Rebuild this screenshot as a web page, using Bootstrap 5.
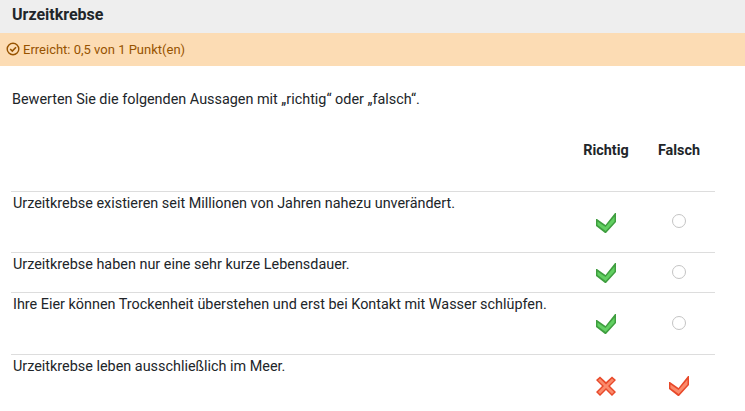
<!DOCTYPE html>
<html lang="de">
  <head>
    <meta charset="UTF-8" />
    <meta name="viewport" content="width=device-width, initial-scale=1.0" />
    <title>Urzeitkrebse</title>
    <link rel="stylesheet" href="https://cdn.jsdelivr.net/npm/bootstrap@5.3.7/dist/css/bootstrap.min.css" />
    <style>
      html, body { height: 411px; overflow: hidden; }
      body { font-family: Roboto, "Liberation Sans", sans-serif; font-size: 14.4px; color: #212529; background: #fff; }
      .quiz-head { height: 33px; background: #eeeeee; padding: 0 12px; font-size: 16px; font-weight: 700; line-height: 30px; }
      .quiz-status { height: 33px; background: #fcdcb4; color: #975300; padding: 0 6px; font-size: 13px; gap: 3px; }
      .quiz-status span { padding-top: 1px; }
      .quiz-status svg { margin-top: -1px; }
      .quiz-prompt { margin: 24px 0 0 12px; line-height: 20px; height: 20px; }
      .quiz-table { width: 704px; margin: 0 0 0 11px; border-collapse: collapse; table-layout: fixed; }
      .quiz-table th { font-weight: 700; text-align: center; vertical-align: top; padding: 30px 0 0 1px; height: 81px; }
      .quiz-table td { border-top: 1px solid #dddddd; vertical-align: top; padding: 3px 0 0 2px; line-height: 17px; }
      .quiz-table td.quiz-cell { vertical-align: middle; text-align: center; padding: 0; }
      .col-answer { width: 73px; }
      .row-tall { height: 61px; }
      .row-low { height: 40px; }
      .row-big { height: 62px; }
      .quiz-radio { display: inline-block; width: 14px; height: 14px; border: 1px solid #c4c4c4; border-radius: 50%; vertical-align: middle; margin-bottom: 2px; }
      .quiz-icon { display: block; margin: 2px auto 0; }
    </style>
  </head>
  <body>
    <svg width="0" height="0" class="position-absolute">
      <defs>
        <symbol id="tick-green" viewBox="0 0 20 20">
          <path d="M0 6 L1 6 L9.5 12 L19 0 L20 0 L20 9 L10 20 L9 20 L0 13 Z" fill="#3f9e3f" />
          <path d="M1.5 8.5 L9.5 14 L18.5 3.5 L18.5 8.5 L9.7 18 L1.5 12 Z" fill="#62cf62" />
        </symbol>
        <symbol id="tick-red" viewBox="0 0 20 20">
          <path d="M0 6 L1 6 L9.5 12 L19 0 L20 0 L20 9 L10 20 L9 20 L0 13 Z" fill="#e8492a" />
          <path d="M1.5 8.5 L9.5 14 L18.5 3.5 L18.5 8.5 L9.7 18 L1.5 12 Z" fill="#fb8a6b" />
        </symbol>
        <symbol id="cross-red" viewBox="0 0 20 20">
          <path d="M4 0.5 L10 6 L16 0.5 L20 4 L14 10 L20 16 L16 20 L10 14 L4 20 L0 16 L6 10 L0 4 Z" fill="#e8492a" />
          <path d="M4 2.5 L10 8.5 L16 2.5 L18 4.2 L12 10 L18 16 L16 18 L10 12 L4 18 L2 16 L8 10 L2 4.2 Z" fill="#fb8a6b" />
        </symbol>
      </defs>
    </svg>

    <div class="quiz-head">Urzeitkrebse</div>
    <div class="quiz-status d-flex align-items-center">
      <svg width="14" height="14" viewBox="0 0 14 14" fill="none" stroke="#975300">
        <circle cx="7" cy="7" r="5.8" stroke-width="1.4" />
        <path d="M4.2 7 L6.3 9.1 L10 5.2" stroke-width="1.6" />
      </svg>
      <span>Erreicht: 0,5 von 1 Punkt(en)</span>
    </div>
    <p class="quiz-prompt">Bewerten Sie die folgenden Aussagen mit „richtig“ oder „falsch“.</p>

    <table class="quiz-table">
      <thead>
        <tr>
          <th></th>
          <th class="col-answer">Richtig</th>
          <th class="col-answer">Falsch</th>
        </tr>
      </thead>
      <tbody>
        <tr class="row-tall">
          <td>Urzeitkrebse existieren seit Millionen von Jahren nahezu unverändert.</td>
          <td class="quiz-cell"><svg class="quiz-icon" width="20" height="20"><use href="#tick-green" /></svg></td>
          <td class="quiz-cell"><span class="quiz-radio"></span></td>
        </tr>
        <tr class="row-low">
          <td>Urzeitkrebse haben nur eine sehr kurze Lebensdauer.</td>
          <td class="quiz-cell"><svg class="quiz-icon" width="20" height="20"><use href="#tick-green" /></svg></td>
          <td class="quiz-cell"><span class="quiz-radio"></span></td>
        </tr>
        <tr class="row-big">
          <td>Ihre Eier können Trockenheit überstehen und erst bei Kontakt mit Wasser schlüpfen.</td>
          <td class="quiz-cell"><svg class="quiz-icon" width="20" height="20"><use href="#tick-green" /></svg></td>
          <td class="quiz-cell"><span class="quiz-radio"></span></td>
        </tr>
        <tr class="row-big">
          <td>Urzeitkrebse leben ausschließlich im Meer.</td>
          <td class="quiz-cell"><svg class="quiz-icon" width="20" height="20"><use href="#cross-red" /></svg></td>
          <td class="quiz-cell"><svg class="quiz-icon" width="20" height="20"><use href="#tick-red" /></svg></td>
        </tr>
      </tbody>
    </table>

    <script src="https://cdn.jsdelivr.net/npm/bootstrap@5.3.7/dist/js/bootstrap.bundle.min.js"></script>
  </body>
</html>
